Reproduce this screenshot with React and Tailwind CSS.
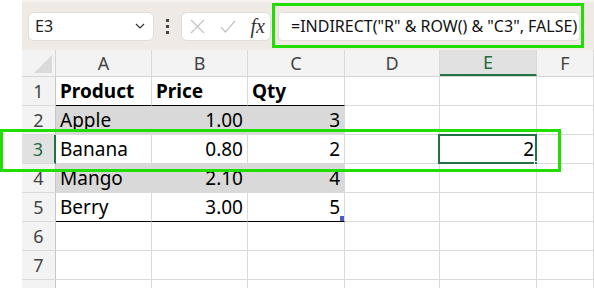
import React from 'react';

const COLS = [
  { key: 'A', w: 'w-[96px]' },
  { key: 'B', w: 'w-[96px]' },
  { key: 'C', w: 'w-[97px]' },
  { key: 'D', w: 'w-[95px]' },
  { key: 'E', w: 'w-[97px]' },
  { key: 'F', w: 'flex-1' },
];

const ROWS = [
  { n: 1, cells: ['Product', 'Price', 'Qty'], bold: true, underline: true },
  { n: 2, cells: ['Apple', '1.00', '3'], fill: true },
  { n: 3, cells: ['Banana', '0.80', '2'], active: true },
  { n: 4, cells: ['Mango', '2.10', '4'], fill: true },
  { n: 5, cells: ['Berry', '3.00', '5'], underline: true, handle: true },
  { n: 6, cells: [] },
  { n: 7, cells: [] },
  { n: '', cells: [] }, // row 8, cut off at the bottom edge
];

const sheetFont = { fontFamily: '"Noto Sans", "Open Sans", sans-serif' };

function Toolbar() {
  return (
    <div className="h-[50px] shrink-0 bg-[#efeae6] flex items-center pl-[6px] pr-[14px] border-t-[2px] border-[#f6f3f1]">
      {/* name box */}
      <div className="w-[126px] h-[29px] bg-white rounded-[6px] border border-[#e2ddd9] flex items-center justify-between pl-[6px] pr-[8px]">
        <span className="text-[16px] text-[#222]">E3</span>
        <svg width="10" height="6" viewBox="0 0 10 6" fill="none" stroke="#333" strokeWidth="1.2">
          <polyline points="1,1 5,5 9,1" />
        </svg>
      </div>
      {/* dots */}
      <div className="w-[27px] flex flex-col items-center gap-[3px]">
        <span className="w-[3px] h-[3px] bg-[#444]" />
        <span className="w-[3px] h-[3px] bg-[#444]" />
        <span className="w-[3px] h-[3px] bg-[#444]" />
      </div>
      {/* cancel / enter / fx */}
      <div className="w-[90px] h-[29px] bg-white rounded-[6px] border border-[#e2ddd9] flex items-center pl-[8px] pr-[5px] justify-between">
        <svg width="15" height="15" viewBox="0 0 15 15" fill="none" stroke="#c4c4c4" strokeWidth="1.2">
          <line x1="1" y1="1" x2="14" y2="14" />
          <line x1="14" y1="1" x2="1" y2="14" />
        </svg>
        <svg width="16" height="13" viewBox="0 0 16 13" fill="none" stroke="#c4c4c4" strokeWidth="1.2">
          <polyline points="1,7 5.5,12 15,1" />
        </svg>
        <span className="text-[20px] italic text-[#333] leading-none" style={{ fontFamily: '"Liberation Serif", serif' }}>fx</span>
      </div>
      <div className="w-[7px]" />
      {/* formula */}
      <div className="flex-1 h-[29px] bg-white rounded-[4px] border border-[#e2ddd9] flex items-center pl-[12px]">
        <span className="text-[16px] text-[#111] whitespace-nowrap">=INDIRECT("R" &amp; ROW() &amp; "C3", FALSE)</span>
      </div>
    </div>
  );
}

function HeaderRow() {
  return (
    <div className="flex shrink-0 h-[27px] bg-[#f3f3f3] border-b border-[#d4d4d4]">
      <div className="w-[34px] border-r border-[#d4d4d4] relative">
        <svg className="absolute right-[3px] bottom-[3px]" width="18" height="18" viewBox="0 0 18 18">
          <polygon points="18,0 18,18 0,18" fill="#dadada" />
        </svg>
      </div>
      {COLS.map((c) => (
        <div
          key={c.key}
          className={`${c.w} border-r border-[#dadada] flex items-center justify-center text-[18px] ${
            c.key === 'E' ? 'bg-[#e1e1e1] text-[#1e6b3f] border-b-[2px] border-b-[#217346]' : 'text-[#444]'
          }`}
        >
          {c.key}
        </div>
      ))}
    </div>
  );
}

function Row({ row }) {
  return (
    <div className="flex shrink-0 h-[29px]">
      <div
        className={`w-[34px] flex items-center justify-center text-[18px] border-b border-[#dadada] ${
          row.active
            ? 'bg-[#e1e1e1] text-[#1e6b3f] border-r-[2px] border-r-[#217346]'
            : 'bg-[#f3f3f3] text-[#444] border-r border-r-[#c6c6c6]'
        }`}
      >
        {row.n}
      </div>
      {COLS.map((c, i) => {
        const inTable = i < 3 && row.cells.length > 0;
        const val = row.cells[i];
        const fill = inTable && row.fill;
        const under = inTable && row.underline;
        return (
          <div
            key={c.key}
            className={`${c.w} relative flex items-end pb-[1px] px-[4px] text-[19px] leading-[26px] text-black ${
              fill ? 'bg-[#d9d9d9]' : 'bg-white'
            } ${under ? 'border-b border-b-black' : 'border-b border-b-[#dadada]'} ${
              fill && i < 2 ? 'border-r border-r-[#d9d9d9]' : 'border-r border-r-[#dadada]'
            } ${i === 0 ? 'justify-start' : 'justify-end'} ${row.bold ? 'font-bold justify-start' : ''}`}
          >
            {val}
            {c.key === 'E' && row.active && (
              <>
                <div className="absolute -left-[2px] -top-[1px] right-[-1px] bottom-[-1px] border-[2px] border-[#217346]" />
                <div className="absolute right-[-4px] bottom-[-4px] w-[6px] h-[6px] bg-[#217346] border border-white" />
                <span className="relative mr-[-2px]">2</span>
              </>
            )}
            {row.handle && i === 2 && (
              <div className="absolute right-0 bottom-0 w-[4px] h-[5px] bg-[#4a5cbf]" />
            )}
          </div>
        );
      })}
    </div>
  );
}

export default function App() {
  return (
    <div className="relative w-[594px] h-[288px] overflow-hidden bg-white flex" style={sheetFont}>
      <div className="w-[22px] shrink-0 bg-white" />
      <div className="flex-1 flex flex-col">
        <Toolbar />
        <HeaderRow />
        {ROWS.map((r, i) => (
          <Row key={i} row={r} />
        ))}
      </div>
      {/* annotation highlights */}
      <div className="absolute left-[272px] top-[3px] w-[312px] h-[45px] border-[3px] border-[#22dd00]" />
      <div className="absolute left-0 top-[129px] w-[561px] h-[43px] border-[3px] border-[#22dd00]" />
    </div>
  );
}
